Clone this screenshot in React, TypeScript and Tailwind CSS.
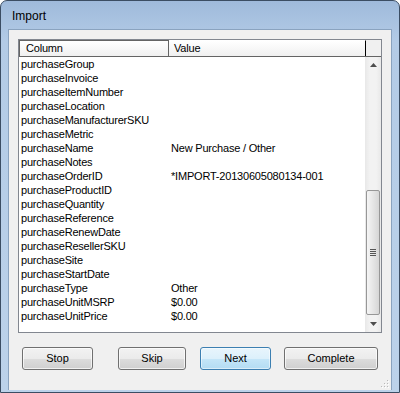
const rows: [string, string][] = [
  ['purchaseGroup', ''],
  ['purchaseInvoice', ''],
  ['purchaseItemNumber', ''],
  ['purchaseLocation', ''],
  ['purchaseManufacturerSKU', ''],
  ['purchaseMetric', ''],
  ['purchaseName', 'New Purchase / Other'],
  ['purchaseNotes', ''],
  ['purchaseOrderID', '*IMPORT-20130605080134-001'],
  ['purchaseProductID', ''],
  ['purchaseQuantity', ''],
  ['purchaseReference', ''],
  ['purchaseRenewDate', ''],
  ['purchaseResellerSKU', ''],
  ['purchaseSite', ''],
  ['purchaseStartDate', ''],
  ['purchaseType', 'Other'],
  ['purchaseUnitMSRP', '$0.00'],
  ['purchaseUnitPrice', '$0.00'],
];

function Button({ label, width, primary }: { label: string; width: string; primary?: boolean }) {
  return (
    <div
      className={`${width} h-[23px] rounded-[3px] border flex items-center justify-center text-[11px] text-black ${
        primary
          ? 'border-[#3c7fb1] bg-[linear-gradient(#e8f5fc_0%,#dcf0fb_50%,#c5e6f8_51%,#b3dcf3_100%)] shadow-[inset_0_0_0_1px_#ffffff80]'
          : 'border-[#707070] bg-[linear-gradient(#f2f2f2_0%,#ebebeb_50%,#dddddd_51%,#cfcfcf_100%)] shadow-[inset_0_0_0_1px_#ffffffb0]'
      }`}
    >
      {label}
    </div>
  );
}

export default function App() {
  return (
    <div
      className="w-[400px] h-[393px] rounded-t-[7px] border border-[#3b4d63] bg-[linear-gradient(#9fbadb_0px,#b3cbe6_40px,#bcd2ea_100%)] flex flex-col overflow-hidden"
      style={{ fontFamily: 'Tahoma, "Liberation Sans", Arial, sans-serif' }}
    >
      {/* Title bar */}
      <div className="h-[28px] shrink-0 flex items-center pl-[11px] pt-[2px] text-[12px] text-black">
        Import
      </div>

      {/* Client area */}
      <div className="ml-[7px] w-[384px] h-[361px] bg-[#f0f0f0] border border-[#8aa3bf] border-b-0 flex flex-col pl-[9px] pt-[9px] relative">
        {/* List view */}
        <div className="w-[364px] h-[294px] border border-[#828790] bg-white flex flex-col">
          {/* Header */}
          <div className="h-[17px] shrink-0 flex text-[11px] text-black border-b border-[#646464] bg-[#f0f0f0] tracking-[-0.2px]">
            <div className="w-[150px] h-full border-l border-t border-[#646464] border-r-[#646464] border-r pl-[6px] flex items-center bg-[linear-gradient(#ffffff,#f0f0f0)]">
              Column
            </div>
            <div className="w-[197px] h-full border-t border-white border-r border-r-[#000000] pl-[5px] flex items-center bg-[linear-gradient(#ffffff,#f0f0f0)]">
              Value
            </div>
            <div className="flex-1 h-full bg-[#f0f0f0]" />
          </div>

          <div className="flex-1 flex">
            {/* Rows */}
            <div className="flex-1 pl-[2px] text-[11px] text-black tracking-[-0.2px]">
              {rows.map(([name, value]) => (
                <div key={name} className="h-[14px] flex items-center leading-none">
                  <span className="w-[150px] whitespace-nowrap">{name}</span>
                  <span className="whitespace-nowrap">{value}</span>
                </div>
              ))}
            </div>

            {/* Scrollbar */}
            <div className="w-[16px] flex flex-col bg-[linear-gradient(90deg,#e8e8e8,#f2f2f2_30%,#f2f2f2_70%,#e8e8e8)]">
              <div className="h-[16px] flex items-center justify-center">
                <svg width="7" height="4" viewBox="0 0 7 4">
                  <path d="M0 4 L3.5 0 L7 4 Z" fill="#4d4d4d" />
                </svg>
              </div>
              <div className="h-[117px]" />
              <div className="h-[125px] mx-[1px] rounded-[2px] border border-[#979797] bg-[linear-gradient(90deg,#f5f5f5,#e6e6e6_50%,#d6d6d6)] flex items-center justify-center">
                <div className="flex flex-col gap-[1px]">
                  <div className="w-[6px] h-[1px] bg-[#555]" />
                  <div className="w-[6px] h-[1px] bg-[#555]" />
                  <div className="w-[6px] h-[1px] bg-[#555]" />
                  <div className="w-[6px] h-[1px] bg-[#555]" />
                </div>
              </div>
              <div className="flex-1 flex items-center justify-center">
                <svg width="7" height="4" viewBox="0 0 7 4">
                  <path d="M0 0 L3.5 4 L7 0 Z" fill="#4d4d4d" />
                </svg>
              </div>
            </div>
          </div>
        </div>

        {/* Buttons */}
        <div className="flex mt-[14px] pl-[4px]">
          <Button label="Stop" width="w-[71px]" />
          <div className="w-[25px]" />
          <Button label="Skip" width="w-[68px]" />
          <div className="w-[14px]" />
          <Button label="Next" width="w-[71px]" primary />
          <div className="w-[13px]" />
          <Button label="Complete" width="w-[94px]" />
        </div>

        {/* Resize grip */}
        <svg className="absolute right-[2px] bottom-[2px]" width="10" height="10" viewBox="0 0 10 10">
          {[
            [8, 2],
            [5, 5],
            [8, 5],
            [2, 8],
            [5, 8],
            [8, 8],
          ].map(([x, y]) => (
            <g key={`${x}-${y}`}>
              <rect x={x} y={y} width="1" height="1" fill="#b8b8b8" />
              <rect x={x + 1} y={y + 1} width="1" height="1" fill="#ffffff" />
            </g>
          ))}
        </svg>
      </div>
    </div>
  );
}
